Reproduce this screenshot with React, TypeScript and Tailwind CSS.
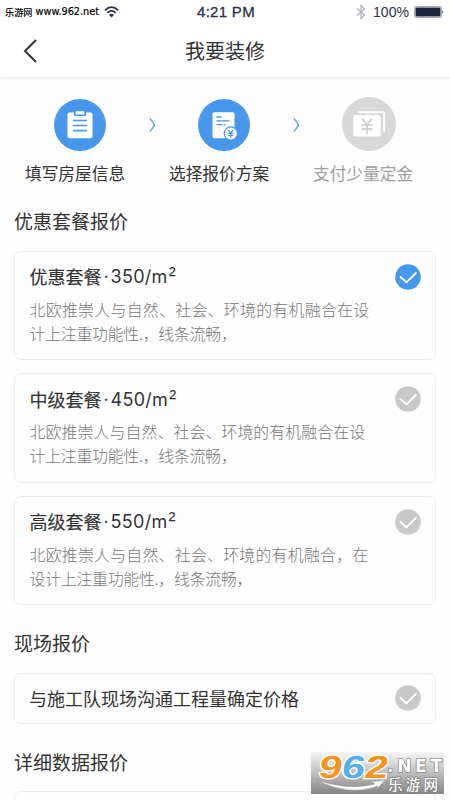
import { useState } from 'react';
import clsx from 'clsx';

type Plan = {
  id: string;
  name: string;
  price: string;
  lines: { text: string; className: string }[];
};

const plans: Plan[] = [
  {
    id: 'basic',
    name: '优惠套餐',
    price: '350',
    lines: [
      { text: '北欧推崇人与自然、社会、环境的有机融合在设', className: 'tracking-[0.3px]' },
      { text: '计上注重功能性.，线条流畅，', className: 'tracking-[-0.25px]' },
    ],
  },
  {
    id: 'middle',
    name: '中级套餐',
    price: '450',
    lines: [
      { text: '北欧推崇人与自然、社会、环境的有机融合在设', className: 'tracking-[0.1px]' },
      { text: '计上注重功能性.，线条流畅，', className: 'tracking-[-0.25px]' },
    ],
  },
  {
    id: 'high',
    name: '高级套餐',
    price: '550',
    lines: [
      { text: '北欧推崇人与自然、社会、环境的有机融合，在', className: 'tracking-[0.25px]' },
      { text: '设计上注重功能性.，线条流畅，', className: 'tracking-[-0.25px]' },
    ],
  },
];

function StatusBar() {
  return (
    <div className="flex h-[25px] items-center pl-[5px] pr-[6px] text-[#2b3247]">
      <div className="flex w-[192px] items-center">
        <span className="flex w-[94px] items-center justify-between whitespace-nowrap font-['Noto_Sans_CJK_SC',sans-serif] text-[9.2px] font-medium text-black">
          乐游网
          <span className="font-['DejaVu_Sans',sans-serif] text-[9.7px] [-webkit-text-stroke:0.2px_currentColor]">www.962.net</span>
        </span>
        <svg className="ml-[5px] h-[12px] w-[15px]" viewBox="0 0 15 12" fill="none" stroke="currentColor" strokeWidth="1.7">
          <path d="M.9 4.3Q7.5-1.9 14.1 4.3M3.3 6.8Q7.5 2.8 11.7 6.8" />
          <path d="M5 8.8Q7.5 6.6 10 8.8L7.5 11.5Z" fill="currentColor" stroke="none" />
        </svg>
      </div>
      <span className="whitespace-nowrap font-['Liberation_Sans',sans-serif] text-[15px] tracking-[0.3px] [-webkit-text-stroke:0.3px_currentColor]">4:21 PM</span>
      <div className="ml-auto flex items-center">
        <svg className="h-[16px] w-[10px] text-[#adb1ba]" viewBox="0 0 10 16" fill="none" stroke="currentColor" strokeWidth="1.2">
          <path d="M1 4.5 8.5 11 5 14.5V1.5L8.5 5 1 11.5" />
        </svg>
        <span className="ml-[7px] font-['Liberation_Sans',sans-serif] text-[14.1px]">100%</span>
        <svg className="ml-[5px] h-[12px] w-[30px]" viewBox="0 0 30 12">
          <rect x=".5" y=".5" width="27" height="11" rx="2" fill="#fff" stroke="#a4a9b5" />
          <rect x="1.5" y="1.5" width="25" height="9" rx="1" fill="#1d263c" />
          <path d="M28.3 4Q30 6 28.3 8Z" fill="#2b3247" />
        </svg>
      </div>
    </div>
  );
}

function FormIcon() {
  return (
    <svg className="h-[52px] w-[52px]" viewBox="0 0 52 52">
      <circle cx="26" cy="26" r="26" fill="#4797ec" />
      <path d="M15.5 13.5h4.5v2.2q0 1.3 1.3 1.3h9.4q1.3 0 1.3-1.3v-2.2h4.5q2 0 2 2v21.7q0 2-2 2h-21q-2 0-2-2V15.5q0-2 2-2z" fill="#fff" />
      <rect x="21.5" y="12.3" width="9" height="3.3" rx=".8" fill="#fff" />
      <path d="M19 21.5h14M19 26.5h14M19 31.7h14" stroke="#4797ec" strokeWidth="1.7" />
    </svg>
  );
}

function QuoteIcon() {
  return (
    <svg className="h-[52px] w-[52px]" viewBox="0 0 52 52">
      <circle cx="26" cy="26" r="26" fill="#4797ec" />
      <rect x="14.5" y="13.3" width="22" height="26" rx="2" fill="#fff" />
      <path d="M18.5 18h5M18.5 21.8h13M18.5 25.7h6M25.8 25.7h1.5" stroke="#4797ec" strokeWidth="1.3" />
      <circle cx="32.8" cy="34.5" r="7.2" fill="#4797ec" />
      <circle cx="32.8" cy="34.5" r="6" fill="#fff" />
      <path d="m30.3 30.8 2.5 3 2.5-3M32.8 33.8v5M30.2 34.3h5.2M30.2 36.5h5.2" fill="none" stroke="#4797ec" strokeWidth="1.2" />
    </svg>
  );
}

function PayIcon() {
  return (
    <svg className="h-[54px] w-[54px]" viewBox="0 0 54 54">
      <circle cx="27" cy="27" r="27" fill="#d8d8d8" />
      <path d="M16 15.3h24.3q1.8 0 1.8 1.8v17.7" fill="none" stroke="#fff" strokeWidth="1.9" />
      <rect x="11.3" y="18.3" width="27.5" height="21.2" rx="2" fill="#fff" />
      <path d="m20.3 21.8 4.8 5.7 4.8-5.7M25.1 27.5v9.5M19.8 28h10.6M19.8 32h10.6" fill="none" stroke="#d0d0d0" strokeWidth="1.8" />
    </svg>
  );
}

function StepArrow() {
  return (
    <svg className="mt-[19px] h-[14px] w-[7px] shrink-0" viewBox="0 0 7 14" fill="none" stroke="#62a8ee" strokeWidth="1.5">
      <path d="M.8.5C2.8 2.5 4.5 5 5.5 7 4.5 9 2.8 11.5.8 13.5" />
    </svg>
  );
}

function CheckMark({ checked }: { checked: boolean }) {
  return (
    <svg className={clsx('h-[26px] w-[26px] shrink-0', checked ? 'text-[#4797ec]' : 'text-[#c8c8c8]')} viewBox="0 0 26 26">
      <circle cx="13" cy="13" r="12.8" fill="currentColor" />
      <path d="m5.5 13 6 5.3 9.3-9.3" fill="none" stroke="#fff" strokeWidth="1.9" strokeLinecap="round" strokeLinejoin="round" />
    </svg>
  );
}

function PlanCard({ plan, checked, onSelect }: { plan: Plan; checked: boolean; onSelect: () => void }) {
  return (
    <button
      onClick={onSelect}
      className="flex h-[109.5px] w-full items-start justify-between rounded-[7px] border border-[#eeeeee] pl-[14.5px] pr-[14px] pt-[12px] text-left"
    >
      <div>
        <h3 className="flex h-[26px] items-center whitespace-nowrap text-[18px] font-normal text-[#333] [-webkit-text-stroke:0.15px_currentColor]">
          {plan.name}
          <span className="ml-[2px] flex items-center font-['Inter',sans-serif] text-[18px] tracking-[0.3px] [-webkit-text-stroke:0px]">
            <span className="mr-[1.5px]">·</span>
            {plan.price}/m<span className="-mt-[3px] ml-px font-['Liberation_Sans',sans-serif] text-[21px] leading-[24px]">²</span>
          </span>
        </h3>
        <div className="mt-[8px] text-[15.9px] leading-[24px] font-light text-[#777]">
          {plan.lines.map((line) => (
            <p key={line.text} className={clsx('whitespace-nowrap', line.className)}>{line.text}</p>
          ))}
        </div>
      </div>
      <CheckMark checked={checked} />
    </button>
  );
}

// 右下角水印
function Watermark() {
  return (
    <svg className="absolute left-[311px] top-[740px] h-[60px] w-[139px]" viewBox="0 -12 139 60">
      <defs>
        <linearGradient id="wm" x1="0" y1="0" x2="0" y2="1">
          <stop offset="0" stopColor="#f6f6f6" />
          <stop offset="1" stopColor="#858585" />
        </linearGradient>
      </defs>
      <rect width="133" height="42" fill="url(#wm)" />
      <g transform="translate(5 0) skewX(-10)" fontFamily="Liberation Sans, sans-serif" fontWeight="700" fontSize="32" stroke="#fff" strokeWidth="2.5" paintOrder="stroke">
        <text x="6" y="26" fill="#f7941d" textLength="23" lengthAdjust="spacingAndGlyphs">9</text>
        <text x="29" y="26" fill="#58aee8" textLength="23" lengthAdjust="spacingAndGlyphs">6</text>
        <text x="52" y="26" fill="#f7941d" textLength="23" lengthAdjust="spacingAndGlyphs">2</text>
      </g>
      <path d="M6 28Q38 45 67 34l-2 4 9-10-14 2 4 2Q38 39 6 28Z" fill="#fff" stroke="#888" strokeWidth=".4" />
      <g fill="#fff" stroke="#777" strokeWidth="1.2" paintOrder="stroke">
        <text x="76" y="20" fontFamily="DejaVu Sans, sans-serif" fontWeight="700" fontSize="17" textLength="55" lengthAdjust="spacing">.NET</text>
        <text x="77" y="37.5" fontFamily="Noto Sans CJK SC, sans-serif" fontWeight="500" fontSize="14.5" textLength="50">乐游网</text>
      </g>
    </svg>
  );
}

export default function App() {
  const [selected, setSelected] = useState('basic');

  return (
    <div className="relative h-[800px] w-[450px] overflow-hidden bg-[#fefefe] font-['Noto_Sans_CJK_SC',sans-serif] text-[#333]">
      {/* 顶部导航 */}
      <header className="h-[77px] bg-white shadow-[0_1px_3px_rgba(0,0,0,0.1)]">
        <StatusBar />
        <div className="grid h-[52px] grid-cols-[1fr_auto_1fr] items-center">
          <button className="ml-[23px] w-[14px]">
            <svg className="h-[24px] w-[14px]" viewBox="0 0 14 24" fill="none" stroke="#333" strokeWidth="2">
              <path d="M13 1 2 12 13 23" />
            </svg>
          </button>
          <h1 className="text-[20px] leading-[30px]">我要装修</h1>
        </div>
      </header>

      {/* 步骤 */}
      <section className="flex h-[127px] items-start pl-[25px] pt-[22px] text-[16.7px] leading-[24px] whitespace-nowrap">
        <div className="w-[101px]">
          <div className="ml-[29px]"><FormIcon /></div>
          <p className="mt-[10px]">填写房屋信息</p>
        </div>
        <div className="ml-[22.5px] flex w-[21.5px]"><StepArrow /></div>
        <div className="w-[101px]">
          <div className="ml-[27.5px]"><QuoteIcon /></div>
          <p className="-ml-px mt-[10px]">选择报价方案</p>
        </div>
        <div className="ml-[21.5px] flex w-[20.5px]"><StepArrow /></div>
        <div className="-mt-[2px] w-[101px]">
          <div className="ml-[29px]"><PayIcon /></div>
          <p className="mt-[10px] text-[#a0a0a0]">支付少量定金</p>
        </div>
      </section>

      <main className="px-[14px]">
        <h2 className="h-[46.5px] pt-[3px] text-[19px] leading-[28px]">优惠套餐报价</h2>
        <div className="flex flex-col gap-[13px]">
          {plans.map((plan) => (
            <PlanCard key={plan.id} plan={plan} checked={selected === plan.id} onSelect={() => setSelected(plan.id)} />
          ))}
        </div>

        <h2 className="h-[67.5px] pt-[24px] text-[19px] leading-[28px]">现场报价</h2>
        <button
          onClick={() => setSelected('onsite')}
          className="flex h-[51px] w-full items-center justify-between rounded-[7px] border border-[#eeeeee] pl-[14px] pr-[14px] text-[18px]"
        >
          与施工队现场沟通工程量确定价格
          <CheckMark checked={selected === 'onsite'} />
        </button>

        <h2 className="h-[67px] pt-[24px] text-[19px] leading-[28px]">详细数据报价</h2>
        <div className="h-[51px] rounded-[7px] border border-[#eeeeee]"></div>
      </main>

      <Watermark />
    </div>
  );
}
